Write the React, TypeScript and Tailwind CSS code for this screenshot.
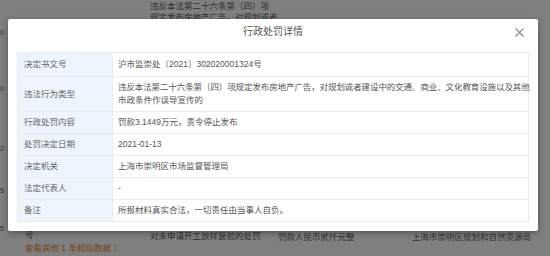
import React from "react";

const rows: { label: string; value: React.ReactNode; h: string }[] = [
  { label: "决定书文号", value: "沪市监崇处〔2021〕302020001324号", h: "h-[23px]" },
  {
    label: "违法行为类型",
    value: (
      <>
        <div className="whitespace-nowrap tracking-[-0.1px]">
          违反本法第二十六条第（四）项规定发布房地产广告，对规划或者建设中的交通、商业、文化教育设施以及其他
        </div>
        <div>市政条件作误导宣传的</div>
      </>
    ),
    h: "h-[35px]",
  },
  { label: "行政处罚内容", value: "罚款3.1449万元，责令停止发布", h: "h-[22px]" },
  { label: "处罚决定日期", value: "2021-01-13", h: "h-[22px]" },
  { label: "决定机关", value: "上海市崇明区市场监督管理局", h: "h-[22px]" },
  { label: "法定代表人", value: "-", h: "h-[22px]" },
  { label: "备注", value: "所报材料真实合法，一切责任由当事人自负。", h: "h-[22px]" },
];

const font = "font-['Liberation_Sans','Noto_Sans_CJK_SC',sans-serif]";

export default function App() {
  return (
    <div className={`relative w-[550px] h-[256px] overflow-hidden bg-white ${font}`}>
      {/* background page */}
      <div className="flex h-full text-[8.5px] leading-[11px] text-[#606060]">
        <div className="w-[25px]">
          <div className="flex flex-col text-[7px] leading-[9px]">
            <span className="mt-[28px]">0</span>
            <span className="mt-[47px]">0</span>
            <span className="mt-[51px]">2</span>
            <span className="mt-[33px]">5</span>
            <span className="mt-[29px]">5</span>
          </div>
        </div>
        <div className="flex-1 flex flex-col justify-between">
          <div className="pl-[125px] pt-[1px]">
            <div>违反本法第二十六条第（四）项</div>
            <div>规定发布房地产广告，对规划或者</div>
          </div>
          <div className="grid grid-cols-[125px_128px_134px_1fr] pb-[1px] leading-[13px]">
            <div>
              <div>号</div>
              <div className="text-[#f08a2e]">查看其他 1 条相似数据 〉</div>
            </div>
            <div className="pt-[1px]">对未申请开工放样复验的处罚</div>
            <div className="pt-[2px]">罚款人民币贰仟元整</div>
            <div className="pt-[2px]">上海市崇明区规划和自然资源局</div>
          </div>
        </div>
      </div>

      {/* overlay */}
      <div className="absolute inset-0 bg-black/50" />

      {/* modal */}
      <div className="absolute left-[8px] top-[19px] w-[530px] bg-white rounded-[2px] shadow-[0_2px_6px_rgba(0,0,0,0.35)] px-[9px] pb-[9px]">
        <div className="relative h-[24px] flex items-center justify-center text-[10px] text-[#555]">
          行政处罚详情
          <svg
            className="absolute right-[5px] top-[9px]"
            width="9"
            height="9"
            viewBox="0 0 9 9"
            fill="none"
            stroke="#8a8a8a"
            strokeWidth="1.1"
          >
            <path d="M0.5 0.5L8.5 8.5M8.5 0.5L0.5 8.5" />
          </svg>
        </div>
        <div className="mt-[9px] border border-[#ececec] text-[8.5px] leading-[13px]">
          {rows.map((r, i) => (
            <div
              key={i}
              className={`flex ${r.h} ${i > 0 ? "border-t border-[#ededed]" : ""}`}
            >
              <div className="w-[95px] shrink-0 bg-[#eef4fb] pl-[6px] flex items-center text-[#666] border-r border-[#e6ecf3]">
                {r.label}
              </div>
              <div className="flex-1 min-w-0 pl-[5px] flex items-center text-[#555]">
                <div>{r.value}</div>
              </div>
            </div>
          ))}
        </div>
      </div>
    </div>
  );
}
